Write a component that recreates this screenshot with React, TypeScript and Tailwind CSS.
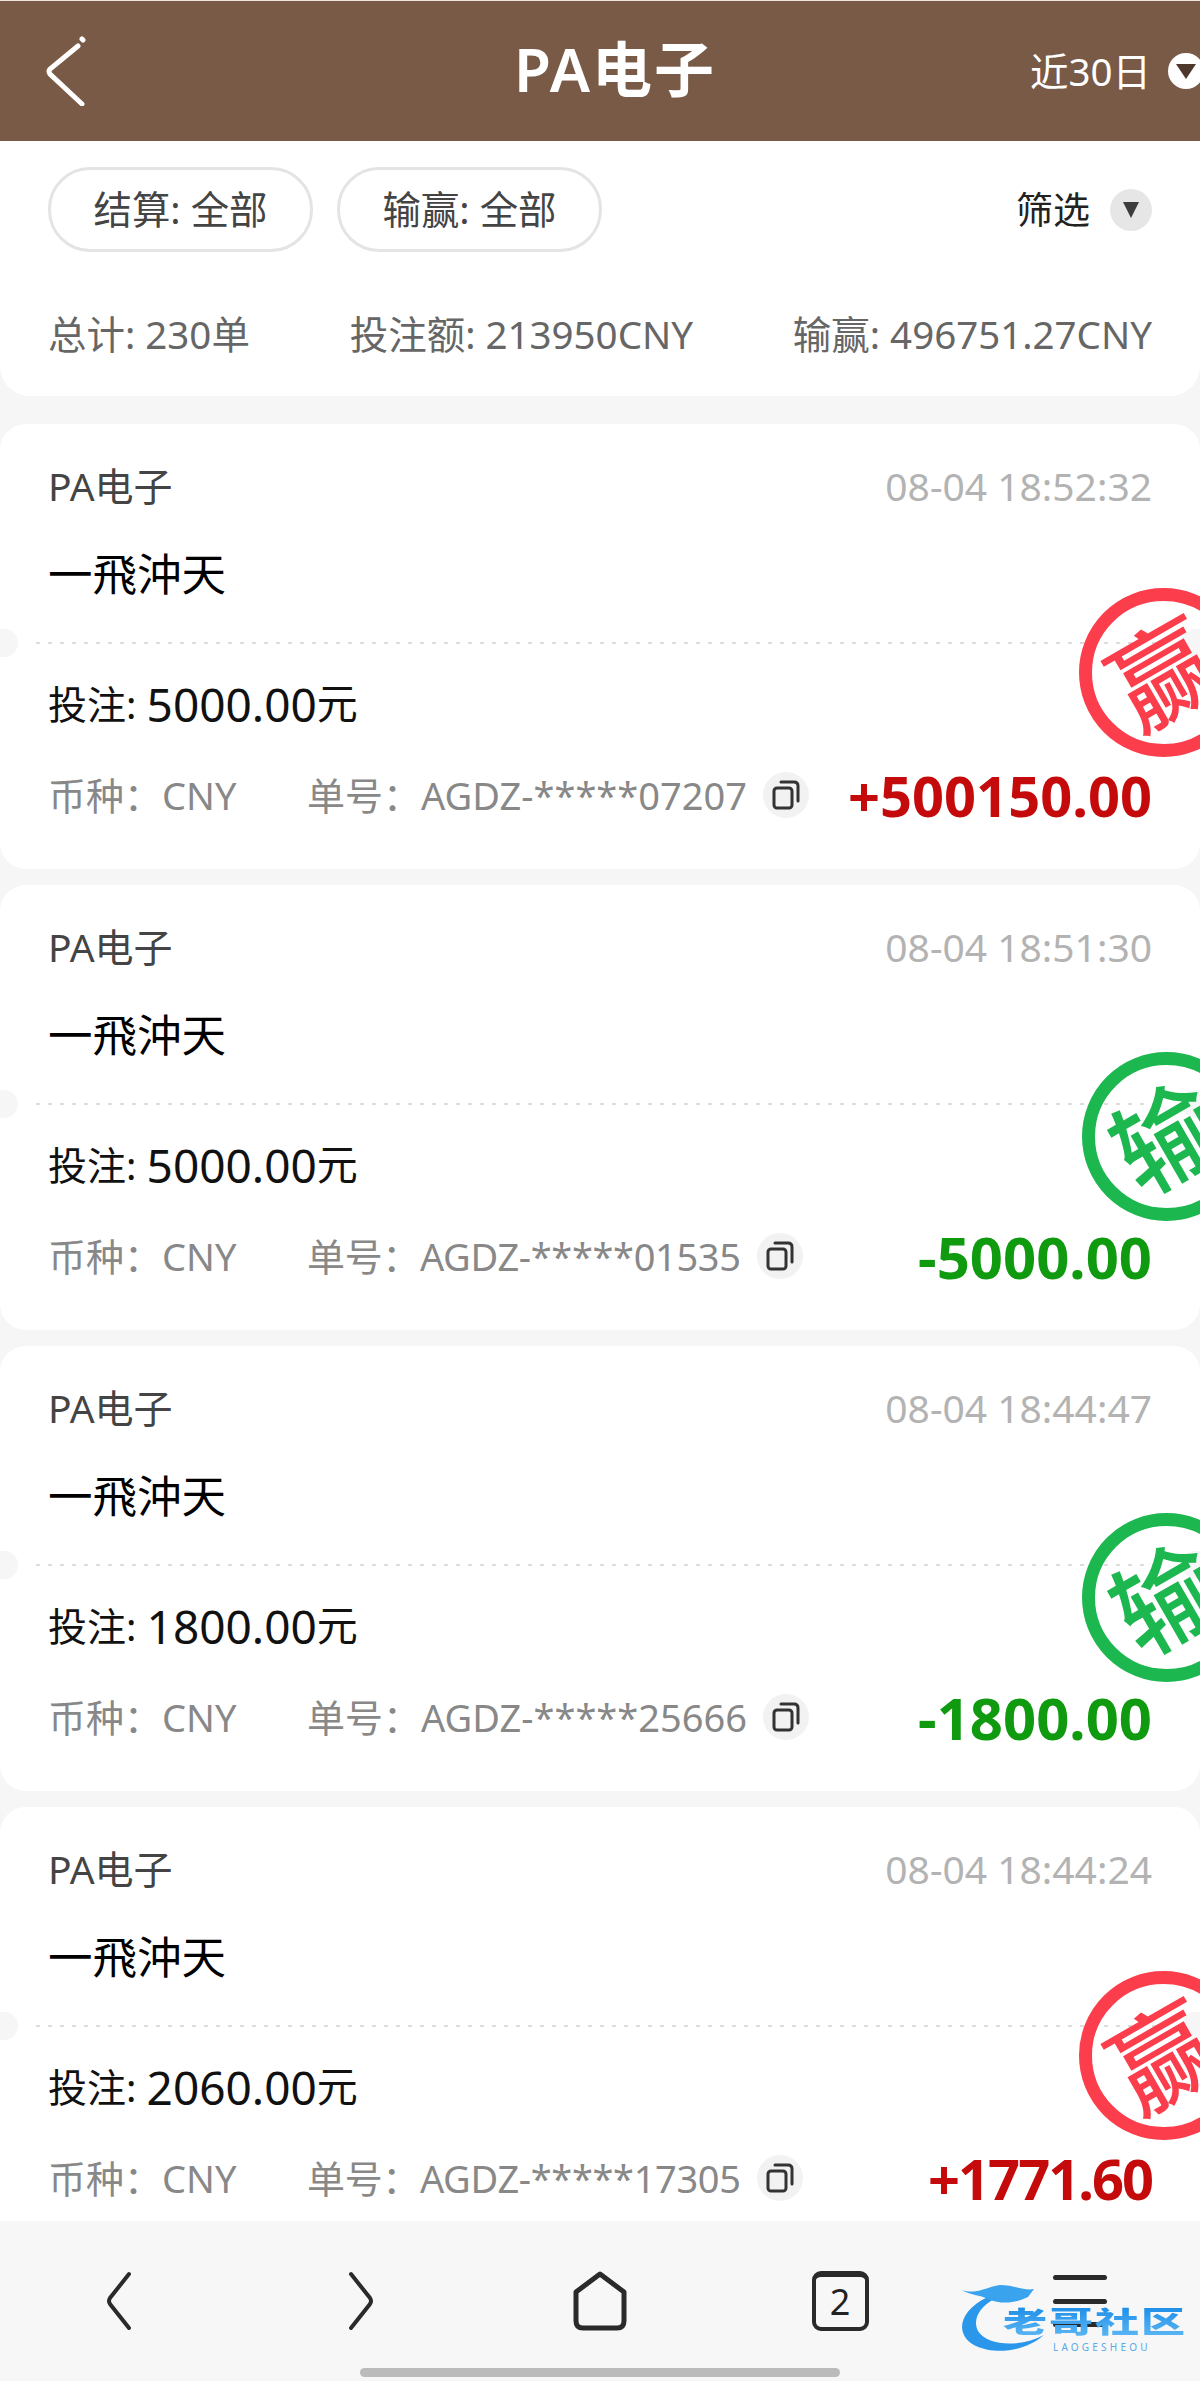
// 投注记录 page: header, filters, summary and bet cards with win/lose stamps

const fontStack = { fontFamily: '"Noto Sans", "Noto Sans CJK SC", sans-serif' }

interface Bet {
  time: string
  stake: string
  orderNo: string
  amount: string
  win: boolean
  narrow?: boolean
}

const bets: Bet[] = [
  { time: '08-04 18:52:32', stake: '5000.00', orderNo: '07207', amount: '+500150.00', win: true },
  { time: '08-04 18:51:30', stake: '5000.00', orderNo: '01535', amount: '-5000.00', win: false, narrow: true },
  { time: '08-04 18:44:47', stake: '1800.00', orderNo: '25666', amount: '-1800.00', win: false },
  { time: '08-04 18:44:24', stake: '2060.00', orderNo: '17305', amount: '+1771.60', win: true, narrow: true },
]

function Header() {
  return (
    <header className="relative h-[141px] shrink-0 border-t border-[#efe6dd] bg-[#785a47] text-white">
      <div className="flex h-full items-center justify-between pl-[46px]">
        <svg width="42" height="70" viewBox="0 0 42 70" fill="none" stroke="#fff" strokeWidth="5" strokeLinecap="round">
          <path d="M32 10 L4 33 Q2 35 4 38 L36 68" />
          <path d="M36 3 L37 4" />
        </svg>
        <div className="flex items-center gap-[17px]">
          <span className="text-[38.5px] leading-none">近30日</span>
          <span className="-mr-[4px] flex h-[36px] w-[36px] items-center justify-center rounded-full bg-white">
            <span className="h-0 w-0 border-x-[10px] border-t-[15px] border-x-transparent border-t-[#4d382b]" />
          </span>
        </div>
      </div>
      <h1 className="absolute top-[36px] left-0 w-full pl-[30px] text-center text-[60px] leading-[64px] font-semibold tracking-[2px]">PA电子</h1>
    </header>
  )
}

function Pill({ children }: { children: string }) {
  return (
    <div className="flex h-[85px] w-[265px] items-center justify-center rounded-[42px] border-[3px] border-[#e4e4e4] text-[38.4px] text-[#444]">
      {children}
    </div>
  )
}

function Filters() {
  return (
    <section className="h-[255px] shrink-0 rounded-b-[30px] bg-white px-[48px] pt-[26px]">
      <div className="flex items-center justify-between">
        <div className="flex gap-[24px]">
          <Pill>结算: 全部</Pill>
          <Pill>输赢: 全部</Pill>
        </div>
        <div className="flex items-center gap-[20px]">
          <span className="text-[37px] text-[#222]">筛选</span>
          <span className="flex h-[42px] w-[42px] items-center justify-center rounded-full bg-[#e6e6e6]">
            <span className="h-0 w-0 border-x-[8px] border-t-[16px] border-x-transparent border-t-[#3c3c3c]" />
          </span>
        </div>
      </div>
      <div className="mt-[52px] flex items-center justify-between text-[38.5px] leading-[60px] text-[#666]">
        <span>总计: 230单</span>
        <span>投注额: 213950CNY</span>
        <span>输赢: 496751.27CNY</span>
      </div>
    </section>
  )
}

function CopyIcon() {
  return (
    <span className="ml-[16px] flex h-[46px] w-[46px] items-center justify-center rounded-full bg-[#f2f2f2]">
      <svg width="30" height="32" viewBox="0 0 30 32" fill="none" stroke="#333" strokeWidth="3" strokeLinecap="round">
        <rect x="3" y="9" width="18" height="20" rx="3" />
        <path d="M10 3 H23 Q27 3 27 7 V22" />
      </svg>
    </span>
  )
}

function Stamp({ win }: { win: boolean }) {
  return (
    <div
      className={
        win
          ? 'absolute top-[164px] left-[1079px] flex h-[169px] w-[169px] items-center justify-center rounded-full border-[13px] border-[#fb3d4c] text-[#fb3d4c]'
          : 'absolute top-[167px] left-[1082px] flex h-[169px] w-[169px] items-center justify-center rounded-full border-[13px] border-[#1cb74f] text-[#1cb74f]'
      }
    >
      <span className="rotate-[-30deg] text-[104px] leading-none font-medium">{win ? '赢' : '输'}</span>
    </div>
  )
}

function BetCard({ bet }: { bet: Bet }) {
  return (
    <article className="relative h-[445px] shrink-0 overflow-hidden rounded-[26px] bg-white px-[48px] pt-[38px]">
      <div className="flex h-[48px] items-center justify-between text-[39px]">
        <span className="text-[#444]">PA电子</span>
        <span className="text-[#b3b3b3]">{bet.time}</span>
      </div>
      <div className="mt-[34px] h-[60px] text-[44.5px] leading-[60px] text-black">一飛沖天</div>
      <div className="-mx-[12px] mt-[38px] h-[2px] bg-[repeating-linear-gradient(90deg,#dcdcdc_0,#dcdcdc_4px,transparent_4px,transparent_12px)]" />
      <div className="mt-[36px] flex h-[48px] items-center text-[39px] text-[#111]">
        投注:&nbsp;<span className="text-[46px]">{bet.stake}</span>
        <span className="text-[41px]">元</span>
      </div>
      <div className="mt-[42px] flex h-[50px] items-center text-[38px] text-[#888]">
        <span className="w-[259px]">币种：CNY</span>
        <span className={bet.narrow ? 'tracking-[-0.35px]' : ''}>单号：AGDZ-*****{bet.orderNo}</span>
        <CopyIcon />
        <span
          className={
            bet.win
              ? bet.narrow
                ? 'ml-auto text-[56px] font-bold tracking-[-2px] text-[#c40a0a]'
                : 'ml-auto text-[56px] font-bold text-[#c40a0a]'
              : 'ml-auto text-[58px] font-bold text-[#0f9a0f]'
          }
        >
          {bet.amount}
        </span>
      </div>
      <span className="absolute top-[205px] -left-[18px] h-[28px] w-[36px] rounded-full bg-[#f6f6f6]" />
      <span className="absolute top-[205px] -right-[18px] h-[28px] w-[36px] rounded-full bg-[#f6f6f6]" />
      <Stamp win={bet.win} />
    </article>
  )
}

function LaogeLogo() {
  return (
    <div className="absolute top-[50px] left-[958px] h-[90px] w-[230px]">
      <svg className="absolute top-0 left-0" width="100" height="90" viewBox="0 0 100 90" fill="none">
        <path d="M30 26 C8 36 0 52 6 64 C14 82 58 88 86 64 C64 76 30 76 20 60 C14 48 22 36 36 28 Z" fill="#2a97ea" />
        <path d="M4 19 C18 24 28 16 42 14 C56 14 66 20 76 18 L70 26 C58 32 44 34 30 28 C22 24 12 24 4 19 Z" fill="#3aa3ee" />
      </svg>
      <span className="absolute top-[29px] left-[45px] origin-left scale-y-[0.66] bg-gradient-to-b from-[#1b8fe8] to-[#5ab6f4] bg-clip-text text-[44px] leading-[44px] font-black tracking-[2px] whitespace-nowrap text-transparent">
        老哥社区
      </span>
      <span className="absolute top-[70px] left-[95px] text-[10px] leading-[12px] tracking-[3.2px] text-[#58aae8]">LAOGESHEOU</span>
    </div>
  )
}

function BottomBar() {
  return (
    <footer className="relative h-[160px] shrink-0 bg-[#f7f7f7]">
      <div className="grid h-[138px] grid-cols-5 items-center justify-items-center pt-[22px] text-[#222]">
        <svg width="30" height="60" viewBox="0 0 30 60" fill="none" stroke="#2a2a2a" strokeWidth="4" strokeLinecap="round">
          <path d="M24 3 L5 27 Q3 30 5 33 L24 57" />
        </svg>
        <svg width="30" height="60" viewBox="0 0 30 60" fill="none" stroke="#2a2a2a" strokeWidth="4" strokeLinecap="round">
          <path d="M6 3 L25 27 Q27 30 25 33 L6 57" />
        </svg>
        <svg width="58" height="60" viewBox="0 0 58 60" fill="none" stroke="#2a2a2a" strokeWidth="5" strokeLinejoin="round">
          <path d="M29 3 L53 21 V50 Q53 57 46 57 H12 Q5 57 5 50 V21 Z" />
        </svg>
        <div className="flex h-[60px] w-[57px] items-center justify-center rounded-[9px] border-[4px] border-t-[6px] border-[#2a2a2a] text-[36px] leading-none">2</div>
        <div className="flex h-[52px] w-[54px] flex-col justify-between">
          <span className="h-[5px] rounded-full bg-[#2a2a2a]" />
          <span className="h-[5px] rounded-full bg-[#2a2a2a]" />
          <span className="h-[5px] rounded-full bg-[#2a2a2a]" />
        </div>
      </div>
      <div className="mx-auto mt-[9px] h-[9px] w-[480px] rounded-full bg-[#bbbbbb]" />
      <LaogeLogo />
    </footer>
  )
}

export default function App() {
  return (
    <div className="flex h-[2381px] w-[1200px] flex-col overflow-hidden bg-[#f6f6f6]" style={fontStack}>
      <Header />
      <Filters />
      <main className="mt-[28px] flex min-h-0 flex-1 flex-col gap-[16px] overflow-hidden">
        {bets.map((bet) => (
          <BetCard key={bet.orderNo} bet={bet} />
        ))}
      </main>
      <BottomBar />
    </div>
  )
}
